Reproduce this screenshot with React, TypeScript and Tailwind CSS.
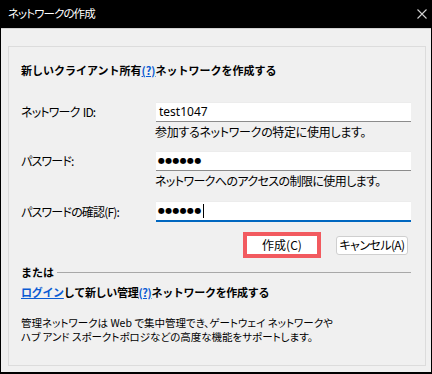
import React from "react";

const jp = "font-['Noto_Sans_CJK_JP','Noto_Sans',sans-serif]";

function Dots({ n }: { n: number }) {
  return (
    <span className="font-['DejaVu_Sans',sans-serif] text-[8px] tracking-[0.3px] leading-none text-black">
      {"●".repeat(n)}
    </span>
  );
}

export default function App() {
  return (
    <div className={`w-[432px] h-[374px] bg-black flex flex-col ${jp}`}>
      <div className="h-[28px] flex items-center justify-between pl-[8px] pr-[5px] shrink-0">
        <span className="text-white text-[11.5px] leading-none [font-feature-settings:'palt'] tracking-[-0.9px]">
          ネットワークの作成
        </span>
        <svg width="10" height="10" viewBox="0 0 10 10">
          <path d="M0.5 0.5 L9.5 9.5 M9.5 0.5 L0.5 9.5" stroke="#d0d0d0" strokeWidth="1.1" />
        </svg>
      </div>
      <div className="flex-1 mx-px mb-[2px] bg-[#f0f0f0] border-t border-[#d2d2d2] pl-[7px] pt-[17px]">
        <div className="w-[418px] h-[320px] border border-[#dcdcdc] pl-[12px] flex flex-col text-black">
          <div className="mt-[15px] h-[16px] flex items-center text-[11px] font-bold tracking-[0px]">
            新しいクライアント所有
            <span className="text-[#0a5bd3] underline">(?)</span>
            ネットワークを作成する
          </div>

          <div className="mt-[24px] flex items-center h-[20px]">
            <div className="w-[135px] text-[12px] [font-feature-settings:'palt'] tracking-[-0.8px]">
              ネットワーク<span className="ml-[3px]">ID:</span>
            </div>
            <div className="w-[255px] h-[20px] bg-white border-b border-[#8c8c8c] border-t border-t-[#ececec] flex items-center pl-[3px] text-[12px] font-['Noto_Sans',sans-serif]">
              test1047
            </div>
          </div>
          <div className="ml-[134px] mt-[2px] h-[16px] flex items-center text-[12px] [font-feature-settings:'palt'] tracking-[-0.3px]">
            参加するネットワークの特定に使用します。
          </div>

          <div className="mt-[11px] flex items-center h-[20px]">
            <div className="w-[135px] text-[12px] [font-feature-settings:'palt'] tracking-[-0.8px]">パスワード:</div>
            <div className="w-[255px] h-[20px] bg-white border-b border-[#8c8c8c] border-t border-t-[#ececec] flex items-center pl-[2px]">
              <Dots n={6} />
            </div>
          </div>
          <div className="ml-[134px] mt-[2px] h-[16px] flex items-center text-[12px] [font-feature-settings:'palt'] tracking-[-0.6px]">
            ネットワークへのアクセスの制限に使用します。
          </div>

          <div className="mt-[12px] flex items-center h-[21px]">
            <div className="w-[135px] text-[12px] [font-feature-settings:'palt'] tracking-[-0.8px]">パスワードの確認(F):</div>
            <div className="w-[255px] h-[21px] bg-white border-b-2 border-[#0067c0] border-t border-t-[#ececec] flex items-center pl-[2px]">
              <Dots n={6} />
              <span className="w-px h-[14px] bg-black ml-[1px]" />
            </div>
          </div>

          <div className="mt-[10px] flex items-center h-[26px]">
            <div className="ml-[222px] w-[78px] h-[26px] border-[4px] border-[#f25a5f] bg-white flex items-center justify-center text-[12px] [font-feature-settings:'palt']">
              作成(C)
            </div>
            <div className="ml-[15px] w-[72px] h-[19px] rounded-[3px] border border-[#cfcfcf] bg-white flex items-center justify-center text-[12px] [font-feature-settings:'palt'] tracking-[-0.6px]">
              キャンセル(A)
            </div>
          </div>

          <div className="mt-[6px] h-[16px] w-[390px] flex items-center">
            <span className="text-[11px] font-bold">または</span>
            <div className="flex-1 h-px bg-[#a8a8a8] ml-[3px]" />
          </div>

          <div className="mt-[4px] h-[16px] flex items-center text-[11px] font-bold tracking-[-0.3px]">
            <span className="text-[#0a5bd3] underline">ログイン</span>
            して新しい管理
            <span className="text-[#0a5bd3] underline">(?)</span>
            ネットワークを作成する
          </div>

          <div className="mt-[16px] text-[10.5px] leading-[14px] [font-feature-settings:'palt'] tracking-[0px]">
            <div>管理ネットワークは Web で集中管理でき、ゲートウェイ ネットワークや</div>
            <div>ハブ アンド スポークトポロジなどの高度な機能をサポートします。</div>
          </div>
        </div>
      </div>
    </div>
  );
}
